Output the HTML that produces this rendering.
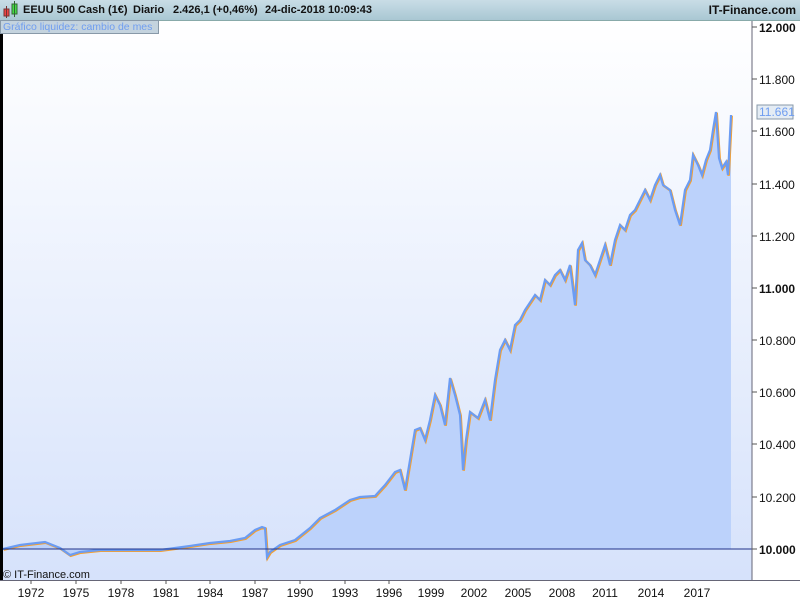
<!DOCTYPE html>
<html><head><meta charset="utf-8"><style>
body{margin:0;width:800px;height:600px;overflow:hidden;font-family:"Liberation Sans",sans-serif;background:#fff;position:relative}
#hd{position:absolute;left:0;top:0;width:800px;height:20px;background:linear-gradient(#c9dde6,#a9c7d3);border-bottom:1px solid #8aa;font-size:11px;font-weight:bold;color:#111}
#hd span{position:absolute;top:4px;white-space:nowrap}
#tag{position:absolute;left:0;top:20px;width:159px;height:14px;background:#c4d3de;border:1px solid #8899a8;color:#6f9df0;font-size:10.5px;line-height:13px;padding-left:2px;box-sizing:border-box;white-space:nowrap;overflow:hidden}
</style></head><body>
<svg width="800" height="600" style="position:absolute;left:0;top:0">
<defs><linearGradient id="bg" x1="0" y1="0" x2="0" y2="1"><stop offset="0" stop-color="#ffffff"/><stop offset="1" stop-color="#d6e2fb"/></linearGradient></defs>
<rect x="0" y="20" width="752" height="560" fill="url(#bg)"/>
<rect x="752" y="20" width="48" height="560" fill="#fff"/>
<path id="p" d="M3,549 L20,545 L45,542 L60,548 L70,555 L80,552 L100,550 L130,550 L160,550 L175,548 L190,546 L210,543 L230,541 L245,538 L255,530 L262,527 L265,528 L267,557 L270,552 L280,545 L295,540 L310,528 L320,518 L335,510 L350,500 L360,497 L375,496 L385,485 L395,472 L400,470 L405,490 L408,472 L415,430 L420,428 L425,440 L430,420 L435,395 L440,405 L445,425 L450,378 L455,395 L460,415 L463,470 L466,440 L470,412 L478,418 L485,400 L490,420 L495,380 L500,350 L505,340 L510,350 L515,325 L520,320 L525,310 L535,295 L540,300 L545,280 L550,285 L555,275 L560,270 L565,280 L570,265 L575,305 L578,250 L582,243 L585,260 L590,265 L595,275 L600,260 L605,245 L610,265 L615,240 L620,225 L625,230 L630,215 L635,210 L640,200 L645,190 L650,200 L655,185 L660,175 L663,185 L670,190 L675,210 L680,225 L685,190 L690,180 L693,155 L698,165 L702,175 L706,160 L710,150 L713,130 L716,112 L719,158 L722,168 L726,162 L728,175 L731,115" fill="none"/>
<path d="M3,549 L20,545 L45,542 L60,548 L70,555 L80,552 L100,550 L130,550 L160,550 L175,548 L190,546 L210,543 L230,541 L245,538 L255,530 L262,527 L265,528 L267,557 L270,552 L280,545 L295,540 L310,528 L320,518 L335,510 L350,500 L360,497 L375,496 L385,485 L395,472 L400,470 L405,490 L408,472 L415,430 L420,428 L425,440 L430,420 L435,395 L440,405 L445,425 L450,378 L455,395 L460,415 L463,470 L466,440 L470,412 L478,418 L485,400 L490,420 L495,380 L500,350 L505,340 L510,350 L515,325 L520,320 L525,310 L535,295 L540,300 L545,280 L550,285 L555,275 L560,270 L565,280 L570,265 L575,305 L578,250 L582,243 L585,260 L590,265 L595,275 L600,260 L605,245 L610,265 L615,240 L620,225 L625,230 L630,215 L635,210 L640,200 L645,190 L650,200 L655,185 L660,175 L663,185 L670,190 L675,210 L680,225 L685,190 L690,180 L693,155 L698,165 L702,175 L706,160 L710,150 L713,130 L716,112 L719,158 L722,168 L726,162 L728,175 L731,115 L731,549 L3,549Z" fill="#bcd2fb"/>
<use href="#p" stroke="#f5a030" stroke-width="2.5" transform="translate(0.7,0.7)"/>
<use href="#p" stroke="#6b9cf3" stroke-width="2.2"/>
<line x1="0" y1="549" x2="752" y2="549" stroke="#223388" stroke-width="1"/>
<rect x="0" y="34" width="3" height="546" fill="#000"/>
<line x1="752" y1="20" x2="752" y2="580" stroke="#667" />
<line x1="0" y1="580.5" x2="800" y2="580.5" stroke="#667"/>
<g stroke="#555">
<line x1="752" y1="27" x2="757" y2="27"/><line x1="752" y1="79" x2="757" y2="79"/><line x1="752" y1="131" x2="757" y2="131"/><line x1="752" y1="184" x2="757" y2="184"/><line x1="752" y1="236" x2="757" y2="236"/><line x1="752" y1="288" x2="757" y2="288"/><line x1="752" y1="340" x2="757" y2="340"/><line x1="752" y1="392" x2="757" y2="392"/><line x1="752" y1="444" x2="757" y2="444"/><line x1="752" y1="497" x2="757" y2="497"/><line x1="752" y1="549" x2="757" y2="549"/>
</g>
<g font-size="12" fill="#111" font-family="Liberation Sans">
<text x="759" y="32" font-weight="bold">12.000</text>
<text x="759" y="84">11.800</text>
<text x="759" y="136">11.600</text>
<text x="759" y="189">11.400</text>
<text x="759" y="241">11.200</text>
<text x="759" y="293" font-weight="bold">11.000</text>
<text x="759" y="345">10.800</text>
<text x="759" y="397">10.600</text>
<text x="759" y="449">10.400</text>
<text x="759" y="502">10.200</text>
<text x="759" y="554" font-weight="bold">10.000</text>
</g>
<rect x="757" y="105" width="36" height="14" fill="#e4ecf4" stroke="#8899aa"/>
<text x="759" y="116" font-size="12" fill="#6f9df0">11.661</text>
<g font-size="12" fill="#111" text-anchor="middle">
<text x="31" y="597">1972</text><text x="76" y="597">1975</text><text x="121" y="597">1978</text><text x="166" y="597">1981</text><text x="210" y="597">1984</text><text x="255" y="597">1987</text><text x="300" y="597">1990</text><text x="345" y="597">1993</text><text x="389" y="597">1996</text><text x="431" y="597">1999</text><text x="474" y="597">2002</text><text x="518" y="597">2005</text><text x="562" y="597">2008</text><text x="605" y="597">2011</text><text x="651" y="597">2014</text><text x="697" y="597">2017</text>
</g>
<g stroke="#555"><line x1="31" y1="580" x2="31" y2="584"/><line x1="76" y1="580" x2="76" y2="584"/><line x1="121" y1="580" x2="121" y2="584"/><line x1="166" y1="580" x2="166" y2="584"/><line x1="210" y1="580" x2="210" y2="584"/><line x1="255" y1="580" x2="255" y2="584"/><line x1="300" y1="580" x2="300" y2="584"/><line x1="345" y1="580" x2="345" y2="584"/><line x1="389" y1="580" x2="389" y2="584"/></g>
<text x="3" y="578" font-size="11" fill="#111">© IT-Finance.com</text>
</svg>
<div id="hd">
<svg width="18" height="20" style="position:absolute;left:2px;top:0"><rect x="2" y="9" width="5" height="7" fill="#e44" stroke="#733"/><line x1="4.5" y1="6" x2="4.5" y2="18" stroke="#733"/><rect x="10" y="4" width="5" height="10" fill="#4d4" stroke="#363"/><line x1="12.5" y1="1" x2="12.5" y2="17" stroke="#363"/></svg>
<span style="left:23px">EEUU 500 Cash (1€)</span>
<span style="left:133px">Diario</span>
<span style="left:173px">2.426,1 (+0,46%)</span>
<span style="left:265px">24-dic-2018 10:09:43</span>
<span style="right:4px;font-size:12px;top:3px">IT-Finance.com</span>
</div>
<div id="tag">Gráfico liquidez: cambio de mes</div>
</body></html>
